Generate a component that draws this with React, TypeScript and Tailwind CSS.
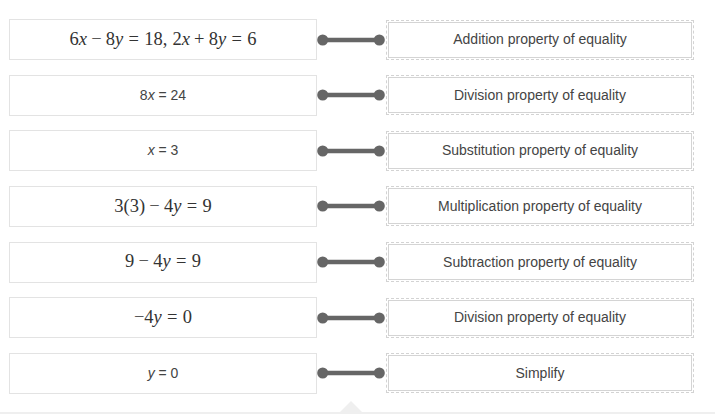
import React from "react";

const serif = { fontFamily: '"Liberation Serif", "DejaVu Serif", serif' };

function Bin({ c }: { c: string }) {
  return <span className="mx-[4.2px]">{c}</span>;
}
function Rel({ c }: { c: string }) {
  return <span className="mx-[5.3px]">{c}</span>;
}
function V({ c }: { c: string }) {
  return <i>{c}</i>;
}

function MathText({ children }: { children: React.ReactNode }) {
  return (
    <span className="text-[18.5px] text-[#333] whitespace-nowrap" style={serif}>
      {children}
    </span>
  );
}

function PlainText({ children }: { children: React.ReactNode }) {
  return (
    <span className="text-[14px] text-[#444] whitespace-nowrap font-['Liberation_Sans',Arial,sans-serif]">
      {children}
    </span>
  );
}

const lefts: React.ReactNode[] = [
  <MathText>
    6<V c="x" />
    <Bin c="−" />8<V c="y" />
    <Rel c="=" />
    18,<span className="ml-[5px]" />2<V c="x" />
    <Bin c="+" />8<V c="y" />
    <Rel c="=" />6
  </MathText>,
  <PlainText>
    8<i>x</i> = 24
  </PlainText>,
  <PlainText>
    <i>x</i> = 3
  </PlainText>,
  <MathText>
    3(3)
    <Bin c="−" />4<V c="y" />
    <Rel c="=" />9
  </MathText>,
  <MathText>
    9<Bin c="−" />4<V c="y" />
    <Rel c="=" />9
  </MathText>,
  <MathText>
    −4<V c="y" />
    <Rel c="=" />0
  </MathText>,
  <PlainText>
    <i>y</i> = 0
  </PlainText>,
];

const rights = [
  "Addition property of equality",
  "Division property of equality",
  "Substitution property of equality",
  "Multiplication property of equality",
  "Subtraction property of equality",
  "Division property of equality",
  "Simplify",
];

function Connector() {
  return (
    <svg width="69" height="14" viewBox="0 0 69 14" className="shrink-0">
      <line x1="6" y1="7" x2="62" y2="7" stroke="#666" strokeWidth="4.5" />
      <circle cx="5.7" cy="7" r="5.5" fill="#666" />
      <circle cx="62.3" cy="7" r="5.5" fill="#666" />
    </svg>
  );
}

export default function App() {
  return (
    <div className="w-[715px] h-[414px] overflow-hidden bg-white flex flex-col">
      <div className="flex flex-col gap-[14.67px] pl-[9px] pt-[19px]">
        {lefts.map((l, i) => (
          <div key={i} className="flex items-center h-[41px]">
            <div className="w-[308px] h-[41px] border border-[#e3e3e3] flex items-center justify-center shrink-0">
              {l}
            </div>
            <Connector />
            <div className="w-[308px] h-[40px] border border-dashed border-[#d3d3d3] p-px shrink-0">
              <div className="w-full h-full border border-[#d4d4d4] flex items-center justify-center">
                <span className="text-[14px] text-[#444] font-['Liberation_Sans',Arial,sans-serif] whitespace-nowrap">
                  {rights[i]}
                </span>
              </div>
            </div>
          </div>
        ))}
      </div>
      <div className="mt-[7px] flex flex-col">
        <div className="ml-[340px] w-0 h-0 border-l-[11px] border-r-[11px] border-b-[11px] border-l-transparent border-r-transparent border-b-[#efefef]" />
        <div className="h-[10px] bg-[#efefef]" />
      </div>
    </div>
  );
}
